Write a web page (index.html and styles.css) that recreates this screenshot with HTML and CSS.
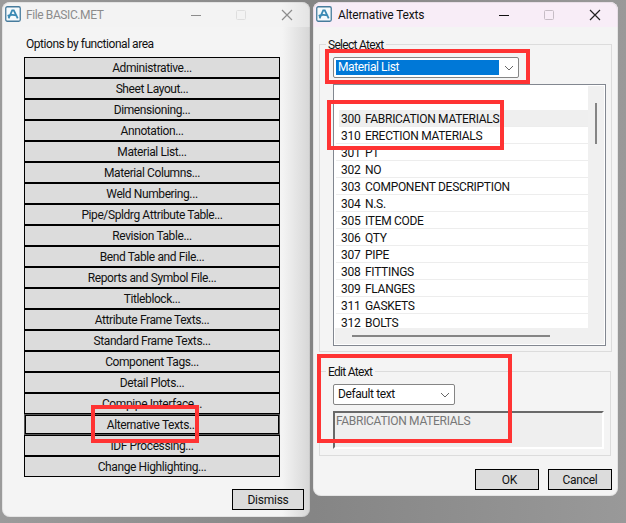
FILE: index.html
```html
<!DOCTYPE html>
<html lang="en">
<head>
<meta charset="utf-8">
<title>File BASIC.MET</title>
<link rel="stylesheet" href="styles.css">
</head>
<body>
<main class="desktop">
  <section class="window file-window">
    <header class="titlebar">
      <svg class="logo" viewBox="0 0 16 16"><rect x=".75" y=".75" width="14.5" height="14.5" rx="1.5" fill="#f5fafc" stroke="#477b9c" stroke-width="1.3"/><path d="M3.6 12.3 7.200 4.400h1.600l3.900 7.900M2.600 9.800c3-1.200 6.500-1 9.400-.2" fill="none" stroke="#3989b3" stroke-width="1.800"/></svg>
      <h1>File BASIC.MET</h1>
      <svg class="controls" viewBox="0 0 102 12"><path d="M0 6.500h10" stroke="#8c8c8c"/><rect x="45.500" y="1.500" width="9" height="9" rx="1" fill="none" stroke="#dedede"/><path d="m91 1 10 10m0-10L91 11" stroke="#8c8c8c" stroke-width="1.200"/></svg>
    </header>
    <p class="caption">Options by functional area</p>
    <nav class="options">
      <button>Administrative...</button>
      <button>Sheet Layout...</button>
      <button>Dimensioning...</button>
      <button>Annotation...</button>
      <button>Material List...</button>
      <button>Material Columns...</button>
      <button>Weld Numbering...</button>
      <button>Pipe/Spldrg Attribute Table...</button>
      <button>Revision Table...</button>
      <button>Bend Table and File...</button>
      <button>Reports and Symbol File...</button>
      <button>Titleblock...</button>
      <button>Attribute Frame Texts...</button>
      <button>Standard Frame Texts...</button>
      <button>Component Tags...</button>
      <button>Detail Plots...</button>
      <button>Compipe Interface...</button>
      <button class="focused">Alternative Texts...</button>
      <button>IDF Processing...</button>
      <button>Change Highlighting...</button>
    </nav>
    <footer><button class="dismiss">Dismiss</button></footer>
  </section>

  <section class="window text-window">
    <header class="titlebar">
      <svg class="logo" viewBox="0 0 16 16"><rect x=".75" y=".75" width="14.5" height="14.5" rx="1.5" fill="#f5fafc" stroke="#477b9c" stroke-width="1.3"/><path d="M3.6 12.3 7.200 4.400h1.600l3.900 7.900M2.600 9.800c3-1.200 6.500-1 9.400-.2" fill="none" stroke="#3989b3" stroke-width="1.800"/></svg>
      <h1>Alternative Texts</h1>
      <svg class="controls" viewBox="0 0 102 12"><path d="M0 6.500h10" stroke="#111"/><rect x="45.500" y="1.500" width="9" height="9" rx="1" fill="none" stroke="#c6bdc5"/><path d="m91 1 10 10m0-10L91 11" stroke="#222" stroke-width="1.200"/></svg>
    </header>
    <div class="group select-group">
      <h2>Select Atext</h2>
      <div class="combo wide"><span class="selected">Material List</span><svg class="chevron" viewBox="0 0 10 6"><path d="m1 1 4 4 4-4" fill="none" stroke="#666"/></svg></div>
      <div class="list">
        <ul class="rows">
          <li class="blank"></li>
          <li class="current"><b>300</b><span>FABRICATION MATERIALS</span></li>
          <li><b>310</b><span>ERECTION MATERIALS</span></li>
          <li><b>301</b><span>PT</span></li>
          <li><b>302</b><span>NO</span></li>
          <li><b>303</b><span>COMPONENT DESCRIPTION</span></li>
          <li><b>304</b><span>N.S.</span></li>
          <li><b>305</b><span>ITEM CODE</span></li>
          <li><b>306</b><span>QTY</span></li>
          <li><b>307</b><span>PIPE</span></li>
          <li><b>308</b><span>FITTINGS</span></li>
          <li><b>309</b><span>FLANGES</span></li>
          <li><b>311</b><span>GASKETS</span></li>
          <li><b>312</b><span>BOLTS</span></li>
        </ul>
        <div class="vscroll"><i></i></div>
        <div class="hscroll"><i></i></div>
      </div>
    </div>
    <div class="group edit-group">
      <h2>Edit Atext</h2>
      <div class="combo"><span>Default text</span><svg class="chevron" viewBox="0 0 10 6"><path d="m1 1 4 4 4-4" fill="none" stroke="#666"/></svg></div>
      <div class="field">FABRICATION MATERIALS</div>
    </div>
    <footer><button>OK</button><button>Cancel</button></footer>
  </section>

  <div class="mark mark-select"></div>
  <div class="mark mark-rows"></div>
  <div class="mark mark-edit"></div>
  <div class="mark mark-option"></div>
</main>
</body>
</html>
```

FILE: styles.css
```css
* { box-sizing: border-box; }
body, h1, h2, p, ul { margin: 0; padding: 0; }
body {
  font: 12px/14px Roboto, "Liberation Sans", sans-serif;
  color: #111;
  overflow: hidden;
}
.desktop {
  position: relative;
  width: 626px;
  height: 523px;
  background: linear-gradient(90deg, #9b9b9b, #858585 50%, #999);
}
.window {
  position: absolute;
  top: 2px;
  display: flex;
  flex-direction: column;
  border-radius: 8px;
  background: #f4f4f4;
  overflow: hidden;
}
.file-window {
  left: 2px;
  width: 308px;
  height: 515px;
  background: linear-gradient(90deg, #f4f4f4 91%, #d6d6d6);
}
.text-window { left: 313px; width: 305px; height: 494px; }
.window::after {
  content: "";
  position: absolute;
  inset: 0;
  border-radius: 8px;
  box-shadow: inset 0 0 0 1px #77777720;
  pointer-events: none;
}
.titlebar {
  display: flex;
  align-items: center;
  height: 25px;
  flex: none;
  padding-left: 3px;
  background: #f2f2f280;
}
.text-window .titlebar { background: #f8edf7; }
.logo { width: 16px; height: 16px; margin-top: -1px; }
h1 {
  margin: 0 auto 0 6px;
  font-size: 12px;
  font-weight: 400;
  line-height: 16px;
  letter-spacing: -0.15px;
  white-space: nowrap;
}
.file-window h1 { margin-left: 5px; color: #8c8c8c; letter-spacing: -0.4px; }
.controls { width: 102px; height: 12px; margin-right: 17px; }
.caption { margin: 10px 0 0 24px; letter-spacing: -0.46px; }
.options { display: flex; flex-direction: column; margin: 6px 30px 0 22px; }
button {
  height: 21px;
  padding: 0;
  border: 1px solid #000;
  border-radius: 0;
  background: #dcdcdc;
  color: #111;
  font: inherit;
}
.options button { padding-top: 1px; letter-spacing: -0.4px; }
.options .focused { box-shadow: inset 0 0 0 1px #000; border-color: #555; }
footer { display: flex; justify-content: flex-end; }
.file-window footer { margin: 12px 6px 0 0; }
.text-window footer { gap: 9px; margin: 13px 6px 0 0; }
footer button { width: 64px; letter-spacing: -0.25px; }
.text-window footer button:first-child { padding-left: 5px; }
footer .dismiss { width: 72px; }
.group {
  margin-left: 6px;
  border: 1px solid #dcdcdc;
  padding-left: 13px;
  flex: none;
}
.select-group { width: 293px; height: 308px; margin-top: 17px; }
.edit-group { width: 292px; height: 85px; margin-top: 19px; }
h2 {
  width: max-content;
  margin: -7px 0 5px -7px;
  padding: 0 3px 0 2px;
  background: #f4f4f4;
  font-size: 12px;
  font-weight: 400;
  line-height: 14px;
  letter-spacing: -0.7px;
}
.combo {
  display: flex;
  align-items: center;
  justify-content: space-between;
  width: 122px;
  height: 21px;
  padding: 0 4px 0 2px;
  border: 1px solid #858585;
  border-radius: 2px;
  background: #fff;
}
.combo.wide { width: 186px; }
.combo span {
  height: 15px;
  padding-left: 2px;
  line-height: 14px;
  letter-spacing: -0.4px;
}
.selected { width: 163px; background: #0078d7; color: #fff; }
.chevron { width: 10px; height: 6px; margin-top: 1px; }
.list {
  display: grid;
  grid-template: 242px 16px / 253px 16px;
  width: 273px;
  height: 262px;
  margin-top: 6px;
  padding: 1px;
  border: 1px solid #828790;
  background: #fff;
}
.rows { overflow: hidden; list-style: none; padding-left: 1px; }
.rows li {
  display: flex;
  height: 17px;
  padding: 1px 0 0 5px;
  border-bottom: 1px solid #ededed;
  line-height: 16px;
  white-space: nowrap;
}
.rows .blank { height: 24px; border: 0; }
.rows .current { margin-left: 3px; padding-left: 2px; background: #efefef; }
.rows li:last-child { height: 14px; padding-top: 4px; border: 0; line-height: 10px; }
.rows b { width: 24px; font-weight: 400; letter-spacing: -0.3px; }
.rows span { letter-spacing: -0.3px; }
.vscroll, .hscroll { background: #f0f0f0; }
.vscroll { padding: 17px 0 0 7px; }
.vscroll i { display: block; width: 2px; height: 41px; background: #858585; }
.hscroll { grid-column: 1 / 3; padding: 7px 0 0 17px; }
.hscroll i { display: block; width: 198px; height: 2px; background: #858585; }
.field {
  width: 271px;
  height: 38px;
  margin-top: 6px;
  padding: 1px;
  border: 2px solid;
  border-color: #696969 #fff #fff #696969;
  background: #efefef;
  color: #777;
  letter-spacing: -0.3px;
}
.mark { position: absolute; border: 4px solid #f33; }
.mark-select { left: 325px; top: 49px; width: 205px; height: 35px; }
.mark-rows { left: 327px; top: 100px; width: 177px; height: 50px; }
.mark-edit { left: 317px; top: 354px; width: 195px; height: 89px; }
.mark-option { left: 91px; top: 405px; width: 108px; height: 38px; }
```
